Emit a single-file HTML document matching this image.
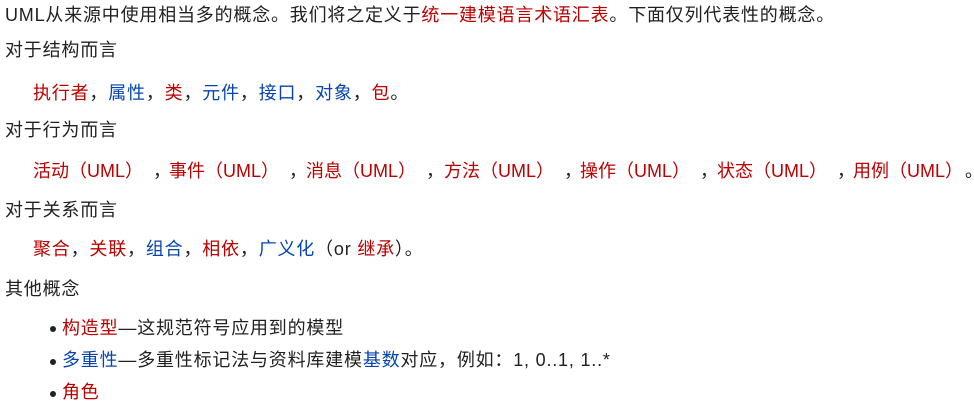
<!DOCTYPE html>
<html><head><meta charset="utf-8"><style>
body{margin:0;background:#fff;width:974px;height:407px;overflow:hidden;font-family:"Liberation Sans","Noto Sans CJK SC",sans-serif;font-size:18px;letter-spacing:0.8px;color:#202122}
.l{position:absolute;white-space:nowrap;line-height:20px}
.r{color:#ba0000}.b{color:#0645ad}
.dot{position:absolute;width:6px;height:6px;border-radius:3px;background:#202122}
.g{position:absolute;top:161px;line-height:20px;white-space:nowrap;letter-spacing:0}
.g i{font-style:normal;position:absolute;left:120px;top:0}
</style></head><body>
<div class="l" style="left:5px;top:5px">UML从来源中使用相当多的概念。我们将之定义于<span class="r">统一建模语言术语汇表</span>。下面仅列代表性的概念。</div>
<div class="l" style="left:5px;top:40px">对于结构而言</div>
<div class="l" style="left:33px;top:83px"><span class="r">执行者</span>，<span class="b">属性</span>，<span class="r">类</span>，<span class="b">元件</span>，<span class="b">接口</span>，<span class="b">对象</span>，<span class="r">包</span>。</div>
<div class="l" style="left:5px;top:120px">对于行为而言</div>
<div class="g" style="left:33px"><span class="r">活动（UML）</span><i>，</i></div>
<div class="g" style="left:169px"><span class="r">事件（UML）</span><i>，</i></div>
<div class="g" style="left:306px"><span class="r">消息（UML）</span><i>，</i></div>
<div class="g" style="left:444px"><span class="r">方法（UML）</span><i>，</i></div>
<div class="g" style="left:580px"><span class="r">操作（UML）</span><i>，</i></div>
<div class="g" style="left:717px"><span class="r">状态（UML）</span><i>，</i></div>
<div class="g" style="left:853px"><span class="r">用例（UML）</span><i style="left:112px">。</i></div>
<div class="l" style="left:5px;top:200px">对于关系而言</div>
<div class="l" style="left:33px;top:239px"><span class="r">聚合</span>，<span class="r">关联</span>，<span class="b">组合</span>，<span class="r">相依</span>，<span class="b">广义化</span>（or <span class="r">继承</span>）。</div>
<div class="l" style="left:5px;top:279px">其他概念</div>
<div class="dot" style="left:50px;top:326px"></div>
<div class="l" style="left:62px;top:318px"><span class="r">构造型</span>—这规范符号应用到的模型</div>
<div class="dot" style="left:50px;top:359px"></div>
<div class="l" style="left:62px;top:350px"><span class="b">多重性</span>—多重性标记法与资料库建模<span class="b">基数</span>对应，例如：1, 0..1, 1..*</div>
<div class="dot" style="left:50px;top:391px"></div>
<div class="l" style="left:62px;top:382px"><span class="r">角色</span></div>
</body></html>
